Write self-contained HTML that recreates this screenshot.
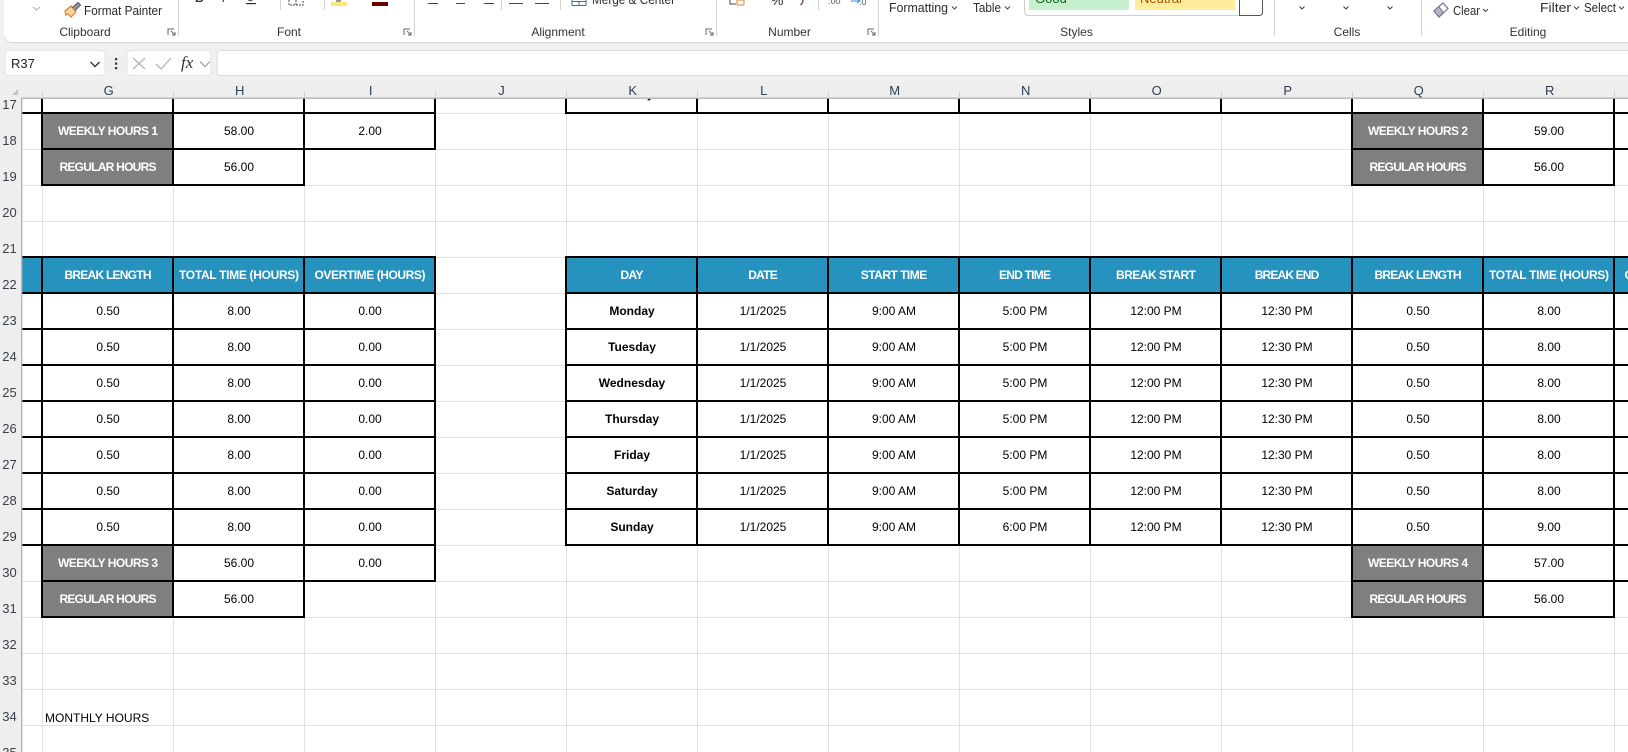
<!DOCTYPE html>
<html lang="en"><head><meta charset="utf-8"><title>Timesheet</title>
<style>
html,body{margin:0;padding:0;width:1628px;height:752px;overflow:hidden;background:#fff}
svg{display:block;font-family:"Liberation Sans",Arial,sans-serif}
.c text{font-size:12px;text-anchor:middle;fill:#000}
.b text{font-size:12px;text-anchor:middle;fill:#000;font-weight:bold}
.h text{font-size:12px;text-anchor:middle;fill:#fff;font-weight:bold}
.r text{font-size:13px;text-anchor:middle;fill:#3a3f48}
.l text{font-size:13px;text-anchor:middle;fill:#2f3d52}
.g text{font-size:12px;text-anchor:middle;fill:#333}
</style></head><body>
<svg xmlns="http://www.w3.org/2000/svg" width="1628" height="752" viewBox="0 0 1628 752">
<!-- sheet -->
<rect width="1628" height="752" fill="#fff"/>
<!-- light grid -->
<path stroke="#e1e1e1" stroke-width="1" fill="none" d="M42.500 98V752M173.500 98V752M304.500 98V752M435.500 98V752M566.500 98V752M697.500 98V752M828.500 98V752M959.500 98V752M1090.500 98V752M1221.500 98V752M1352.500 98V752M1483.500 98V752M1614.500 98V752M22 113.500H1628M22 149.500H1628M22 185.500H1628M22 221.500H1628M22 257.500H1628M22 293.500H1628M22 329.500H1628M22 365.500H1628M22 401.500H1628M22 437.500H1628M22 473.500H1628M22 509.500H1628M22 545.500H1628M22 581.500H1628M22 617.500H1628M22 653.500H1628M22 689.500H1628M22 725.500H1628"/>
<!-- fills -->
<g fill="#2593bd"><rect x="22" y="257" width="414" height="36"/><rect x="566" y="257" width="1062" height="36"/></g>
<g fill="#7f7f7f"><rect x="42" y="113" width="131" height="72"/><rect x="42" y="545" width="131" height="72"/><rect x="1352" y="113" width="131" height="72"/><rect x="1352" y="545" width="131" height="72"/></g>
<!-- thick borders -->
<path stroke="#000" stroke-width="2" fill="none" d="M22 113H436M41 149H436M41 185H305M22 257H436M22 293H436M22 329H436M22 365H436M22 401H436M22 437H436M22 473H436M22 509H436M22 545H436M41 581H436M41 617H305
M42 98V186M173 98V186M304 98V186M435 98V150M42 256V618M173 256V618M304 256V618M435 256V582
M565 113H1628M1351 149H1628M1351 185H1615M565 257H1628M565 293H1628M565 329H1628M565 365H1628M565 401H1628M565 437H1628M565 473H1628M565 509H1628M565 545H1628M1351 581H1628M1351 617H1615
M566 98V114M697 98V114M828 98V114M959 98V114M1090 98V114M1221 98V114M1352 98V186M1483 98V186M1614 98V186
M566 256V546M697 256V546M828 256V546M959 256V546M1090 256V546M1221 256V546M1352 256V618M1483 256V618M1614 256V618"/>
<!-- cell text -->
<g class="b"><text x="632" y="98">Sunday</text></g>
<g class="h">
<text x="108" y="135" textLength="100">WEEKLY HOURS 1</text><text x="108" y="171" textLength="97">REGULAR HOURS</text>
<text x="1418" y="135" textLength="100">WEEKLY HOURS 2</text><text x="1418" y="171" textLength="97">REGULAR HOURS</text>
<text x="108" y="567" textLength="100">WEEKLY HOURS 3</text><text x="108" y="603" textLength="97">REGULAR HOURS</text>
<text x="1418" y="567" textLength="100">WEEKLY HOURS 4</text><text x="1418" y="603" textLength="97">REGULAR HOURS</text>
<text x="108" y="279" textLength="87">BREAK LENGTH</text><text x="239" y="279" textLength="120">TOTAL TIME (HOURS)</text><text x="370" y="279" textLength="111">OVERTIME (HOURS)</text>
<text x="632" y="279" textLength="23">DAY</text><text x="763" y="279" textLength="29.500">DATE</text><text x="894" y="279" textLength="66.500">START TIME</text><text x="1025" y="279" textLength="52">END TIME</text><text x="1156" y="279" textLength="80">BREAK START</text><text x="1287" y="279" textLength="64.500">BREAK END</text><text x="1418" y="279" textLength="87">BREAK LENGTH</text><text x="1549" y="279" textLength="120">TOTAL TIME (HOURS)</text><text x="1680" y="279" textLength="111">OVERTIME (HOURS)</text>
</g>
<g class="c">
<text x="239" y="135">58.00</text><text x="370" y="135">2.00</text><text x="239" y="171">56.00</text>
<text x="1549" y="135">59.00</text><text x="1549" y="171">56.00</text>
<text x="239" y="567">56.00</text><text x="370" y="567">0.00</text><text x="239" y="603">56.00</text>
<text x="1549" y="567">57.00</text><text x="1549" y="603">56.00</text>

<text x="108" y="315">0.50</text><text x="239" y="315">8.00</text><text x="370" y="315">0.00</text>
<text x="108" y="351">0.50</text><text x="239" y="351">8.00</text><text x="370" y="351">0.00</text>
<text x="108" y="387">0.50</text><text x="239" y="387">8.00</text><text x="370" y="387">0.00</text>
<text x="108" y="423">0.50</text><text x="239" y="423">8.00</text><text x="370" y="423">0.00</text>
<text x="108" y="459">0.50</text><text x="239" y="459">8.00</text><text x="370" y="459">0.00</text>
<text x="108" y="495">0.50</text><text x="239" y="495">8.00</text><text x="370" y="495">0.00</text>
<text x="108" y="531">0.50</text><text x="239" y="531">8.00</text><text x="370" y="531">0.00</text>

<text x="763" y="315">1/1/2025</text><text x="894" y="315">9:00 AM</text><text x="1025" y="315">5:00 PM</text><text x="1156" y="315">12:00 PM</text><text x="1287" y="315">12:30 PM</text><text x="1418" y="315">0.50</text><text x="1549" y="315">8.00</text>
<text x="763" y="351">1/1/2025</text><text x="894" y="351">9:00 AM</text><text x="1025" y="351">5:00 PM</text><text x="1156" y="351">12:00 PM</text><text x="1287" y="351">12:30 PM</text><text x="1418" y="351">0.50</text><text x="1549" y="351">8.00</text>
<text x="763" y="387">1/1/2025</text><text x="894" y="387">9:00 AM</text><text x="1025" y="387">5:00 PM</text><text x="1156" y="387">12:00 PM</text><text x="1287" y="387">12:30 PM</text><text x="1418" y="387">0.50</text><text x="1549" y="387">8.00</text>
<text x="763" y="423">1/1/2025</text><text x="894" y="423">9:00 AM</text><text x="1025" y="423">5:00 PM</text><text x="1156" y="423">12:00 PM</text><text x="1287" y="423">12:30 PM</text><text x="1418" y="423">0.50</text><text x="1549" y="423">8.00</text>
<text x="763" y="459">1/1/2025</text><text x="894" y="459">9:00 AM</text><text x="1025" y="459">5:00 PM</text><text x="1156" y="459">12:00 PM</text><text x="1287" y="459">12:30 PM</text><text x="1418" y="459">0.50</text><text x="1549" y="459">8.00</text>
<text x="763" y="495">1/1/2025</text><text x="894" y="495">9:00 AM</text><text x="1025" y="495">5:00 PM</text><text x="1156" y="495">12:00 PM</text><text x="1287" y="495">12:30 PM</text><text x="1418" y="495">0.50</text><text x="1549" y="495">8.00</text>
<text x="763" y="531">1/1/2025</text><text x="894" y="531">9:00 AM</text><text x="1025" y="531">6:00 PM</text><text x="1156" y="531">12:00 PM</text><text x="1287" y="531">12:30 PM</text><text x="1418" y="531">0.50</text><text x="1549" y="531">9.00</text>
</g>
<g class="b">
<text x="632" y="315">Monday</text><text x="632" y="351">Tuesday</text><text x="632" y="387">Wednesday</text><text x="632" y="423">Thursday</text><text x="632" y="459">Friday</text><text x="632" y="495">Saturday</text><text x="632" y="531">Sunday</text>
</g>
<text x="45" y="722" font-size="12" fill="#000">MONTHLY HOURS</text>

<!-- chrome background -->
<rect x="0" y="0" width="1628" height="83" fill="#f0f0f0"/>
<rect x="0" y="83" width="1628" height="15" fill="#eeeeee"/>
<rect x="0" y="83" width="21" height="669" fill="#eeeeee"/>
<path stroke="#b4b4b4" stroke-width="1.400" fill="none" d="M21.700 98V752M21 98.200H1628"/>
<path stroke="#cfcfcf" stroke-width="1" fill="none" d="M42.500 91V98M173.500 91V98M304.500 91V98M435.500 91V98M566.500 91V98M697.500 91V98M828.500 91V98M959.500 91V98M1090.500 91V98M1221.500 91V98M1352.500 91V98M1483.500 91V98M1614.500 91V98"/>
<path d="M18 89V95H12Z" fill="#c4c4c4"/>
<!-- column letters -->
<g class="l"><text x="108.700" y="95">G</text><text x="239.700" y="95">H</text><text x="370.700" y="95">I</text><text x="501.500" y="95">J</text><text x="632.700" y="95">K</text><text x="763.700" y="95">L</text><text x="894.700" y="95">M</text><text x="1025.700" y="95">N</text><text x="1156.700" y="95">O</text><text x="1287.700" y="95">P</text><text x="1418.700" y="95">Q</text><text x="1549.700" y="95">R</text></g>
<!-- row numbers -->
<g class="r"><text x="9.500" y="109">17</text><text x="9.500" y="145">18</text><text x="9.500" y="181">19</text><text x="9.500" y="217">20</text><text x="9.500" y="253">21</text><text x="9.500" y="289">22</text><text x="9.500" y="325">23</text><text x="9.500" y="361">24</text><text x="9.500" y="397">25</text><text x="9.500" y="433">26</text><text x="9.500" y="469">27</text><text x="9.500" y="505">28</text><text x="9.500" y="541">29</text><text x="9.500" y="577">30</text><text x="9.500" y="613">31</text><text x="9.500" y="649">32</text><text x="9.500" y="685">33</text><text x="9.500" y="721">34</text><text x="9.500" y="757">35</text></g>

<!-- formula bar -->
<rect x="5" y="50.500" width="100" height="25" rx="4" fill="#fff" stroke="#e2e2e2"/>
<rect x="127" y="50.500" width="84" height="25" rx="4" fill="#fff" stroke="#e2e2e2"/>
<rect x="217" y="50.500" width="1420" height="25" rx="4" fill="#fff" stroke="#dcdcdc"/>
<text x="11" y="68" font-size="13" fill="#222">R37</text>
<path d="M90.500 62L95 66.500L99.500 62" stroke="#333" stroke-width="1.400" fill="none"/>
<g fill="#333"><rect x="115" y="58" width="2.200" height="2.200"/><rect x="115" y="62.500" width="2.200" height="2.200"/><rect x="115" y="67" width="2.200" height="2.200"/></g>
<path d="M133 58L145 69M145 58L133 69" stroke="#b5b5b5" stroke-width="1.300" fill="none"/>
<path d="M156 64L161 69L171 58" stroke="#b5b5b5" stroke-width="1.300" fill="none"/>
<text x="181" y="68" font-family="'Liberation Serif',serif" font-style="italic" font-size="17" fill="#333">fx</text>
<path d="M200 61.500L205 66.500L210 61.500" stroke="#9a9a9a" stroke-width="1.200" fill="none"/>

<!-- ribbon -->
<rect x="4" y="-12" width="1640" height="55" rx="8" fill="#d4d4d4"/>
<rect x="4" y="-12" width="1640" height="54" rx="8" fill="#fff"/>
<path stroke="#d2d2d2" stroke-width="1" fill="none" d="M178.500 0V36M414.500 0V36M716.500 0V36M878.500 0V36M1274.500 0V36M1421.500 0V36M280.500 0V10M324.500 0V10M501.500 0V10M560.500 0V10M818.500 0V10"/>
<g class="g"><text x="85" y="36">Clipboard</text><text x="289" y="36">Font</text><text x="558" y="36">Alignment</text><text x="789.500" y="36">Number</text><text x="1076.500" y="36">Styles</text><text x="1347" y="36">Cells</text><text x="1528" y="36">Editing</text></g>
<!-- launchers -->
<g stroke="#666" stroke-width="1" fill="none"><path d="M168 35V29H174M171 31L175 35M175 32V35H172"/><path d="M404 35V29H410M407 31L411 35M411 32V35H408"/><path d="M706 35V29H712M709 31L713 35M713 32V35H710"/><path d="M868 35V29H874M871 31L875 35M875 32V35H872"/></g>
<!-- clipboard -->
<path d="M33 7L36.500 10L40 7" stroke="#a8a8a8" stroke-width="1" fill="none"/>
<path d="M65 11L71 6L76 12L71 17L68 14L66 15Z" fill="#f3d3a8" stroke="#d9822b" stroke-width="1.200"/>
<path d="M72 8L78 2.500L80.500 5L75 10.500" fill="#9a9a9a" stroke="#555" stroke-width="1"/>
<text x="84" y="15" font-size="12.500" fill="#2b2b2b" textLength="78" lengthAdjust="spacingAndGlyphs">Format Painter</text>
<!-- font clipped tools -->
<text x="195" y="2" font-size="12" font-weight="bold" fill="#333">B</text>
<text x="222" y="2" font-size="12" font-style="italic" fill="#333">I</text>
<text x="246" y="1" font-size="12" fill="#333">U</text>
<rect x="246" y="3" width="10" height="1.200" fill="#333"/>
<path d="M289 0V5H303V0" stroke="#444" stroke-width="1" stroke-dasharray="2 1" fill="none"/>
<path d="M296 0V5" stroke="#444" stroke-width="1" stroke-dasharray="2 1"/>
<rect x="331" y="2" width="16" height="4" fill="#fde77a"/><rect x="336" y="0" width="5" height="2" fill="#999"/>
<rect x="372" y="2" width="16" height="4" fill="#6a0000"/>
<!-- alignment -->
<path stroke="#444" stroke-width="1" fill="none" d="M428 3.500H438M456 3.500H465M484 3.500H494M509 3.500H523M535 3.500H549"/>
<path d="M572 0V5.500H586V0M572 1.500H586M579 1.500V5.500" stroke="#3b6fb5" stroke-width="1" fill="none"/>
<text x="592" y="4" font-size="12.500" fill="#2b2b2b" textLength="83" lengthAdjust="spacingAndGlyphs">Merge &amp; Center</text>
<!-- number -->
<path d="M730 0V4H736" stroke="#444" fill="none"/><rect x="737" y="0" width="7" height="5" rx="1" fill="#fff" stroke="#d9822b"/>
<text x="771" y="5" font-size="14" fill="#333">%</text>
<path d="M803 0Q803 3 800.500 5" stroke="#6a3a5a" stroke-width="1.300" fill="none"/>
<text x="828" y="4" font-size="9" fill="#555">.00</text>
<path d="M851 1H860M857 -1L860 1L857 3" stroke="#3a8fd6" stroke-width="1" fill="none"/>
<text x="859" y="5" font-size="9" fill="#555">.0</text>
<!-- styles -->
<text x="889" y="12" font-size="12.500" fill="#2b2b2b" textLength="59" lengthAdjust="spacingAndGlyphs">Formatting</text>
<path d="M952 6.500L954.500 9L957 6.500" stroke="#444" stroke-width="1" fill="none"/>
<text x="973" y="12" font-size="12.500" fill="#2b2b2b" textLength="28" lengthAdjust="spacingAndGlyphs">Table</text>
<path d="M1005 6.500L1007.500 9L1010 6.500" stroke="#444" stroke-width="1" fill="none"/>
<path d="M1024.500 0V11.500Q1024.500 15.500 1028.500 15.500H1259Q1262.500 15.500 1262.500 11.500V0" fill="#fff" stroke="#cfcfcf"/>
<rect x="1029" y="0" width="100" height="10" fill="#c6efce"/>
<rect x="1135" y="0" width="100" height="10" fill="#ffeb9c"/>
<text x="1035" y="3" font-size="13" fill="#0f5f1f">Good</text>
<text x="1140" y="3" font-size="13" fill="#9c5700">Neutral</text>
<path d="M1239.500 0V15.500H1259Q1262.500 15.500 1262.500 12V0" fill="#fff" stroke="#555"/>
<!-- cells -->
<path d="M1299.500 6.500L1302 9L1304.500 6.500M1343.500 6.500L1346 9L1348.500 6.500M1387.500 6.500L1390 9L1392.500 6.500" stroke="#444" stroke-width="1.100" fill="none"/>
<!-- editing -->
<path d="M1434 11L1443 3L1448 8.500L1439 17Z" fill="#fff" stroke="#7d6a94" stroke-width="1.200"/>
<path d="M1434 11L1438.500 6.500L1443.500 12.500L1439 17Z" fill="#b9b3c4" stroke="#7d6a94" stroke-width="1"/>
<text x="1453" y="15" font-size="13" fill="#2b2b2b" textLength="27" lengthAdjust="spacingAndGlyphs">Clear</text>
<path d="M1483 9L1485.500 11.500L1488 9" stroke="#444" stroke-width="1" fill="none"/>
<text x="1540" y="12" font-size="13" fill="#2b2b2b" textLength="31" lengthAdjust="spacingAndGlyphs">Filter</text>
<path d="M1574 6.500L1576.500 9L1579 6.500" stroke="#444" stroke-width="1" fill="none"/>
<text x="1584" y="12" font-size="13" fill="#2b2b2b" textLength="32" lengthAdjust="spacingAndGlyphs">Select</text>
<path d="M1619 6.500L1621.500 9L1624 6.500" stroke="#444" stroke-width="1" fill="none"/>
</svg>
</body></html>
